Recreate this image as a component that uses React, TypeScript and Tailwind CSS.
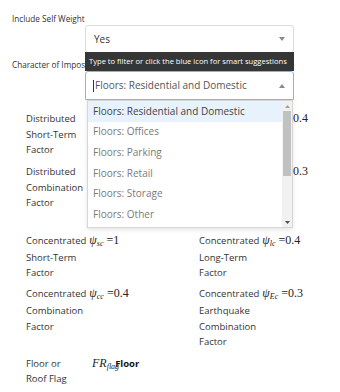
import { ReactNode } from "react";

const options = [
  "Floors: Residential and Domestic",
  "Floors: Offices",
  "Floors: Parking",
  "Floors: Retail",
  "Floors: Storage",
  "Floors: Other",
];

function Caret({ up = false }: { up?: boolean }) {
  return (
    <svg width="6" height="4" viewBox="0 0 6 4" className="shrink-0">
      <path d={up ? "M0 4 L3 0 L6 4 Z" : "M0 0 L6 0 L3 4 Z"} fill="#8a8a8a" />
    </svg>
  );
}

function Psi({ sub, value }: { sub: string; value: string }) {
  return (
    <span className="ml-[3px] whitespace-nowrap font-['Liberation_Serif','DejaVu_Serif',serif] text-[12px] text-[#222]">
      <i>ψ</i>
      <span className="relative top-[2px] text-[8px] italic">{sub}</span>
      <span className="ml-[3px]">=</span>
      <span>{value}</span>
    </span>
  );
}

function Field({ lines, math }: { lines: string[]; math?: ReactNode }) {
  return (
    <div className="flex items-start">
      <div className="leading-[15.6px]">
        {lines.map((l, i) => (
          <div key={i} className="whitespace-nowrap">
            {l}
            {i === 0 && math}
          </div>
        ))}
      </div>
    </div>
  );
}

export default function App() {
  return (
    <div className="relative h-[392px] w-[340px] overflow-hidden bg-white font-['Open_Sans',sans-serif] text-[#333]">
      {/* Include Self Weight */}
      <div className="pl-[12px] pt-[14px] text-[8.2px] leading-[10px] text-[#333]">Include Self Weight</div>
      <div className="ml-[85px] mt-[1px] flex h-[28px] w-[209px] items-center justify-between rounded-[3px] border border-[#dcdcdc] pl-[8px] pr-[8px] text-[10px] text-[#333]">
        <span>Yes</span>
        <Caret />
      </div>

      {/* Character of Imposed Load */}
      <div className="mt-[7px] whitespace-nowrap pl-[12px] text-[8.2px] leading-[10px] text-[#333]">
        Character of Imposed Load
      </div>
      <div className="relative z-10 ml-[85px] mt-[1px] w-[209px]">
        <div className="absolute -top-[19px] left-0 flex h-[19px] w-[209px] items-center bg-[#363636] pl-[4px] text-[7.6px] whitespace-nowrap text-white">
          Type to filter or click the blue icon for smart suggestions
        </div>
        <div className="flex h-[29px] items-center justify-between rounded-t-[3px] border border-[#7db8ec] pl-[7px] pr-[8px] text-[10px] text-[#555]">
          <span className="flex items-center">
            <span className="mr-[1px] h-[12px] w-[1px] bg-[#333]" />
            Floors: Residential and Domestic
          </span>
          <Caret up />
        </div>
        <div className="absolute left-[2px] top-full flex h-[128px] w-[206px] border border-[#d6d6d6] bg-white shadow-[0_2px_4px_rgba(0,0,0,0.1)]">
          <div className="flex-1">
            {options.map((o, i) => (
              <div
                key={o}
                className={
                  i === 0
                    ? "flex h-[20.6px] items-center bg-[#e8f2fc] pl-[5px] text-[10px] text-[#444]"
                    : "flex h-[20.6px] items-center pl-[5px] text-[10px] text-[#7a7a7a]"
                }
              >
                {o}
              </div>
            ))}
          </div>
          <div className="flex w-[10px] flex-col bg-[#f1f1f1]">
            <div className="flex h-[10px] items-center justify-center">
              <svg width="5" height="3" viewBox="0 0 5 3"><path d="M0 3 L2.5 0 L5 3 Z" fill="#a0a0a0" /></svg>
            </div>
            <div className="mx-[1px] h-[65px] bg-[#c1c1c1]" />
            <div className="flex-1" />
            <div className="flex h-[10px] items-center justify-center">
              <svg width="5" height="3" viewBox="0 0 5 3"><path d="M0 0 L5 0 L2.5 3 Z" fill="#505050" /></svg>
            </div>
          </div>
        </div>
      </div>

      {/* Distributed factors */}
      <div className="mt-[11px] flex flex-col gap-[6.5px] pl-[26px] pr-[32px] text-[9.5px] text-[#333]">
        <div className="flex items-start justify-between">
          <Field lines={["Distributed", "Short-Term", "Factor"]} />
          <span className="font-['Liberation_Serif',serif] text-[12px] leading-[15.6px] text-[#222]">0.4</span>
        </div>
        <div className="flex items-start justify-between">
          <Field lines={["Distributed", "Combination", "Factor"]} />
          <span className="font-['Liberation_Serif',serif] text-[12px] leading-[15.6px] text-[#222]">0.3</span>
        </div>
      </div>

      {/* Concentrated factors */}
      <div className="mt-[22px] grid grid-cols-[173px_1fr] gap-y-[5.5px] pl-[26px] text-[9.5px] text-[#333]">
        <Field lines={["Concentrated", "Short-Term", "Factor"]} math={<Psi sub="sc" value="1" />} />
        <Field lines={["Concentrated", "Long-Term", "Factor"]} math={<Psi sub="lc" value="0.4" />} />
        <Field lines={["Concentrated", "Combination", "Factor"]} math={<Psi sub="cc" value="0.4" />} />
        <Field lines={["Concentrated", "Earthquake", "Combination", "Factor"]} math={<Psi sub="Ec" value="0.3" />} />
      </div>

      {/* Floor or roof flag */}
      <div className="mt-[6px] flex items-start pl-[26px] text-[9.5px] text-[#333]">
        <div className="w-[66px] leading-[15.6px]">
          <div>Floor or</div>
          <div>Roof Flag</div>
        </div>
        <div className="-mt-[2px] flex items-baseline whitespace-nowrap">
          <span className="font-['Liberation_Serif',serif] text-[12px] italic text-[#222]">FR</span>
          <span className="relative top-[2px] font-['Liberation_Serif',serif] text-[8px] italic text-[#222]">flag</span>
          <span className="-ml-[4px] text-[9.5px] font-bold text-[#111]">Floor</span>
        </div>
      </div>
    </div>
  );
}
